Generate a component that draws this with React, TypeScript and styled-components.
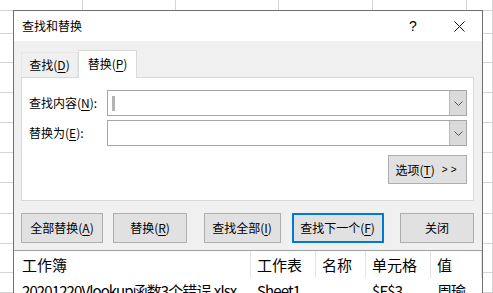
import styled, { createGlobalStyle } from 'styled-components';

const GlobalStyle = createGlobalStyle`
  html, body {
    margin: 0;
    padding: 0;
    overflow: hidden;
    background: #fff;
  }
  body {
    font-family: 'Noto Sans CJK SC', 'Noto Sans', sans-serif;
    color: #000;
  }
`;

const Desktop = styled.div`
  position: relative;
  width: 493px;
  height: 293px;
  overflow: hidden;
  background: #fff;
`;

const Sheet = styled.div`
  display: grid;
  grid-template-columns: 83px 93px 103px 94px 94px 1fr;
  grid-template-rows: 11px 23px 29px 30px 30px 30px 30px 31px 30px 29px 1fr;
  height: 100%;
`;

const Cell = styled.div`
  box-sizing: border-box;
  border-right: 1px solid #d4d4d4;
  border-bottom: 1px solid #d4d4d4;
`;

const Dialog = styled.div`
  position: absolute;
  left: 13px;
  top: 10px;
  width: 470px;
  height: 300px;
  box-sizing: border-box;
  border: 1px solid #707070;
  background: #f0f0f0;
  display: flex;
  flex-direction: column;
  font-size: 12px;
`;

const TitleBar = styled.div`
  height: 30px;
  background: #fff;
  display: flex;
  align-items: center;
  padding-left: 8px;
`;

const Title = styled.div`
  flex: 1;
  line-height: 16px;
`;

const CaptionButton = styled.div`
  width: 46px;
  height: 30px;
  display: flex;
  align-items: center;
  justify-content: center;
  font-size: 14px;
  font-family: 'Liberation Sans', sans-serif;
`;

const Body = styled.div`
  padding: 9px 8px 7px 7px;
`;

const Tabs = styled.div`
  display: flex;
  align-items: flex-end;
  height: 27px;
`;

const Tab = styled.div<{ $active?: boolean }>`
  box-sizing: border-box;
  display: flex;
  align-items: center;
  justify-content: center;
  width: ${p => (p.$active ? 59 : 57)}px;
  height: ${p => (p.$active ? 28 : 25)}px;
  margin-bottom: ${p => (p.$active ? -1 : 0)}px;
  position: relative;
  z-index: ${p => (p.$active ? 1 : 0)};
  background: ${p => (p.$active ? '#fff' : '#f0f0f0')};
  border: 1px solid ${p => (p.$active ? '#d9d9d9' : '#e6e6e6')};
  border-bottom: none;
  line-height: 16px;
  padding-bottom: ${p => (p.$active ? 2 : 0)}px;
`;

const Panel = styled.div`
  box-sizing: border-box;
  height: 124px;
  background: #fff;
  border: 1px solid #d9d9d9;
  padding: 12px 6px 0 7px;
`;

const FieldRow = styled.div`
  display: flex;
  align-items: center;
  height: 26px;
  margin-bottom: 4px;
`;

const Label = styled.div`
  width: 78px;
  line-height: 16px;
`;

const Combo = styled.div`
  box-sizing: border-box;
  width: 360px;
  height: 26px;
  border: 1px solid #a6a6a6;
  display: flex;
  background: #fff;
`;

const ComboText = styled.div`
  flex: 1;
  display: flex;
  align-items: center;
  padding-left: 4px;
`;

const Caret = styled.span`
  width: 3px;
  height: 15px;
  background: #b4b4b4;
`;

const DropButton = styled.div`
  width: 16px;
  border-left: 1px solid #b9b9b9;
  background: #dadada;
  display: flex;
  align-items: center;
  justify-content: center;
`;

const OptionsRow = styled.div`
  display: flex;
  justify-content: flex-end;
  margin-top: 9px;
`;

const Button = styled.div<{ $w: number; $h?: number; $focus?: boolean }>`
  box-sizing: border-box;
  width: ${p => p.$w}px;
  height: ${p => p.$h ?? 30}px;
  display: flex;
  align-items: center;
  justify-content: center;
  background: #e1e1e1;
  border: ${p => (p.$focus ? '2px solid #0078d7' : '1px solid #adadad')};
  line-height: 16px;
  white-space: nowrap;
`;

const Arrows = styled.span`
  font-size: 10px;
  margin-left: 7px;
  letter-spacing: 3px;
  font-family: 'Liberation Sans', sans-serif;
`;

const ButtonRow = styled.div`
  display: flex;
  justify-content: space-between;
  margin-top: 12px;
`;

const Group = styled.div<{ $gap: number }>`
  display: flex;
  gap: ${p => p.$gap}px;
`;

const Results = styled.div`
  flex: 1;
  background: #fff;
  border-top: 1px solid #a0a0a0;
  display: grid;
  grid-template-columns: 237px 65px 50px 65px 1fr;
  grid-auto-rows: 27px 25px;
  font-size: 15px;
  align-content: start;
`;

const ResultCell = styled.div<{ $head?: boolean; $first?: boolean }>`
  box-sizing: border-box;
  display: flex;
  align-items: center;
  padding-left: ${p => (p.$first ? 8 : 6)}px;
  border-right: ${p => (p.$head ? '1px solid #e3e3e3' : 'none')};
  letter-spacing: ${p => (p.$head ? 0 : -0.9)}px;
  white-space: nowrap;
  overflow: hidden;
  line-height: 20px;
`;

const U = styled.u`
  text-underline-offset: 2px;
`;

function Chevron() {
  return (
    <svg width="9" height="5" viewBox="0 0 9 5">
      <path d="M0.5 0.5 L4.5 4.5 L8.5 0.5" fill="none" stroke="#555" strokeWidth="1" />
    </svg>
  );
}

function CloseIcon() {
  return (
    <svg width="11" height="11" viewBox="0 0 11 11">
      <path d="M0.5 0.5 L10.5 10.5 M10.5 0.5 L0.5 10.5" stroke="#111" strokeWidth="1" />
    </svg>
  );
}

const headers = ['工作簿', '工作表', '名称', '单元格', '值'];
const row = ['20201220Vlookup函数3个错误.xlsx', 'Sheet1', '', '$E$3', '周瑜'];

export default function App() {
  return (
    <>
      <GlobalStyle />
      <Desktop>
        <Sheet>
          {Array.from({ length: 66 }, (_, i) => (
            <Cell key={i} />
          ))}
        </Sheet>
        <Dialog>
          <TitleBar>
            <Title>查找和替换</Title>
            <CaptionButton>?</CaptionButton>
            <CaptionButton>
              <CloseIcon />
            </CaptionButton>
          </TitleBar>
          <Body>
            <Tabs>
              <Tab>
                查找(<U>D</U>)
              </Tab>
              <Tab $active>
                替换(<U>P</U>)
              </Tab>
            </Tabs>
            <Panel>
              <FieldRow>
                <Label>
                  查找内容(<U>N</U>):
                </Label>
                <Combo>
                  <ComboText>
                    <Caret />
                  </ComboText>
                  <DropButton>
                    <Chevron />
                  </DropButton>
                </Combo>
              </FieldRow>
              <FieldRow>
                <Label>
                  替换为(<U>E</U>):
                </Label>
                <Combo>
                  <ComboText />
                  <DropButton>
                    <Chevron />
                  </DropButton>
                </Combo>
              </FieldRow>
              <OptionsRow>
                <Button $w={79} $h={29}>
                  选项(<U>T</U>)<Arrows>&gt;&gt;</Arrows>
                </Button>
              </OptionsRow>
            </Panel>
            <ButtonRow>
              <Group $gap={10}>
                <Button $w={82}>
                  全部替换(<U>A</U>)
                </Button>
                <Button $w={74}>
                  替换(<U>R</U>)
                </Button>
              </Group>
              <Group $gap={11}>
                <Button $w={77}>
                  查找全部(<U>I</U>)
                </Button>
                <Button $w={92} $focus>
                  查找下一个(<U>F</U>)
                </Button>
              </Group>
              <Button $w={74}>关闭</Button>
            </ButtonRow>
          </Body>
          <Results>
            {headers.map((h, i) => (
              <ResultCell key={h} $head $first={i === 0}>
                {h}
              </ResultCell>
            ))}
            {row.map((c, i) => (
              <ResultCell key={i} $first={i === 0}>
                {c}
              </ResultCell>
            ))}
          </Results>
        </Dialog>
      </Desktop>
    </>
  );
}
